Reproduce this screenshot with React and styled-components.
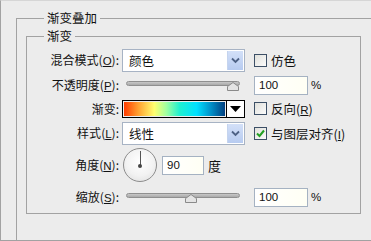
import styled, { createGlobalStyle } from "styled-components";

const GlobalStyle = createGlobalStyle`
  html, body {
    margin: 0;
    padding: 0;
    background: #ececec;
  }
  body {
    font-family: "Noto Sans CJK SC", "Liberation Sans", sans-serif;
    font-size: 12px;
    color: #111;
  }
`;

const Chevron = () => (
  <svg width="9" height="7" viewBox="0 0 9 7">
    <path d="M1 1.5 L4.5 5 L8 1.5" fill="none" stroke="#4d6185" strokeWidth="1.8" />
  </svg>
);

const Select = ({ value }) => (
  <SelectBox>
    <SelectText>{value}</SelectText>
    <SelectButton>
      <Chevron />
    </SelectButton>
  </SelectBox>
);

const Slider = ({ pos }) => (
  <SliderWrap>
    <Track />
    <Thumb style={{ left: pos }}>
      <svg width="12" height="9" viewBox="0 0 12 9">
        <path d="M0.5 8.5 L0.5 4.5 L6 0.5 L11.5 4.5 L11.5 8.5 Z" fill="#e4e4e4" stroke="#8a8a8a" />
      </svg>
    </Thumb>
  </SliderWrap>
);

const Check = ({ checked, children }) => (
  <CheckRow>
    <Box>
      {checked && (
        <svg width="9" height="9" viewBox="0 0 9 9">
          <path d="M1 4.5 L3.5 7 L8 1.5" fill="none" stroke="#22a022" strokeWidth="2" />
        </svg>
      )}
    </Box>
    <span>{children}</span>
  </CheckRow>
);

const Key = ({ k }) => (
  <>
    (<U>{k}</U>)
  </>
);

const App = () => {
  return (
    <Frame>
      <GlobalStyle />
      <Outer>
        <Legend>渐变叠加</Legend>
        <Inner>
          <InnerLegend>渐变</InnerLegend>
          <Grid>
            <Label>混合模式<Key k="O" />:</Label>
            <Select value="颜色" />
            <Check>仿色</Check>

            <Label>不透明度<Key k="P" />:</Label>
            <Slider pos={105} />
            <InputRow>
              <Field>100</Field>
              <Unit>%</Unit>
            </InputRow>

            <Label>渐变:</Label>
            <GradientPicker>
              <Swatch />
              <Arrow>
                <svg width="11" height="6" viewBox="0 0 11 6">
                  <path d="M0 0 L11 0 L5.5 6 Z" fill="#000" />
                </svg>
              </Arrow>
            </GradientPicker>
            <Check>反向<Key k="R" /></Check>

            <Label>样式<Key k="L" />:</Label>
            <Select value="线性" />
            <Check checked>与图层对齐<Key k="I" /></Check>

            <Label>角度<Key k="N" />:</Label>
            <AngleRow>
              <Dial>
                <Needle />
                <Pin />
              </Dial>
              <Field $w={42}>90</Field>
              <Unit $size={13}>度</Unit>
            </AngleRow>
            <span />

            <Label>缩放<Key k="S" />:</Label>
            <Slider pos={63} />
            <InputRow>
              <Field>100</Field>
              <Unit>%</Unit>
            </InputRow>
          </Grid>
        </Inner>
      </Outer>
    </Frame>
  );
};

export default App;

const Frame = styled.div`
  width: 371px;
  height: 241px;
  box-sizing: border-box;
  border-left: 1px solid #a2a2a2;
  border-bottom: 1px solid #a2a2a2;
  border-top: 1px solid #d6d6d6;
  overflow: hidden;
  background: #ececec;
`;

const Outer = styled.fieldset`
  margin: 8px -20px 0 15px;
  padding: 0 0 0 9px;
  border: 1px solid #a2a2a2;
  border-right: none;
  border-bottom: none;
  height: 240px;
  box-sizing: border-box;
`;

const Legend = styled.legend`
  margin-left: 18px;
  padding: 0 3px;
  font-size: 12.5px;
  line-height: 18px;
`;

const Inner = styled.fieldset`
  margin: 1px 0 0 0;
  width: 335px;
  box-sizing: border-box;
  padding: 4px 0 3px 0;
  border: 1px solid #a2a2a2;
`;

const InnerLegend = styled.legend`
  margin-left: 17px;
  padding: 0 3px;
  font-size: 12.5px;
  line-height: 16px;
`;

const Grid = styled.div`
  display: grid;
  grid-template-columns: 92px 123px auto;
  grid-template-rows: 25px 24px 23px 26px 38px 26px;
  column-gap: 3px;
  align-items: center;
  & > :nth-child(3n) {
    margin-left: 6px;
  }
`;

const Label = styled.div`
  text-align: right;
  white-space: nowrap;
  line-height: 16px;
`;

const U = styled.span`
  text-decoration: underline;
  font-family: "Liberation Sans", sans-serif;
  font-size: 11.5px;
`;

const SelectBox = styled.div`
  display: flex;
  align-items: stretch;
  height: 23px;
  box-sizing: border-box;
  border: 1px solid #a7b3c4;
  background: #fff;
`;

const SelectText = styled.div`
  flex: 1;
  padding-left: 6px;
  line-height: 21px;
  font-size: 12.5px;
`;

const SelectButton = styled.div`
  width: 15px;
  margin: 1px;
  display: flex;
  align-items: center;
  justify-content: center;
  background: linear-gradient(#d3e0f8, #b7cbf0);
  border-left: 1px solid #c5d4ee;
`;

const SliderWrap = styled.div`
  position: relative;
  height: 14px;
`;

const Track = styled.div`
  position: absolute;
  left: 4px;
  right: 5px;
  top: 3px;
  height: 3px;
  border: 1px solid #8f8f8f;
  border-radius: 3px;
  background: linear-gradient(#c8c8c8, #a9a9a9);
`;

const Thumb = styled.div`
  position: absolute;
  top: 4px;
  width: 12px;
  height: 9px;
  display: flex;
`;

const CheckRow = styled.div`
  display: flex;
  align-items: center;
  gap: 4px;
  white-space: nowrap;
  font-size: 12.5px;
`;

const Box = styled.div`
  width: 11px;
  height: 11px;
  border: 1px solid #3c4f66;
  background: linear-gradient(135deg, #e0e0db, #fbfbfb);
  display: flex;
  align-items: center;
  justify-content: center;
`;

const InputRow = styled.div`
  display: flex;
  align-items: center;
  gap: 4px;
`;

const Field = styled.div`
  width: ${(p) => p.$w || 54}px;
  height: 19px;
  box-sizing: border-box;
  border: 1px solid #a5b2c2;
  background: linear-gradient(90deg, #ffffff, #fffff4);
  padding-left: 4px;
  font-family: "Liberation Sans", sans-serif;
  font-size: 11.5px;
  line-height: 17px;
`;

const Unit = styled.span`
  font-family: "Liberation Sans", "Noto Sans CJK SC", sans-serif;
  font-size: ${(p) => p.$size || 11.5}px;
  margin-left: -1px;
`;

const GradientPicker = styled.div`
  display: flex;
  height: 18px;
  box-sizing: border-box;
  border: 1px solid #000;
`;

const Swatch = styled.div`
  flex: 1;
  margin: 1px;
  background: linear-gradient(
    90deg,
    #ff3b00 0%,
    #ffa030 14%,
    #ffff70 30%,
    #a0ffa0 42%,
    #20f0d0 55%,
    #00e0ff 72%,
    #0090c8 86%,
    #003f80 100%
  );
`;

const Arrow = styled.div`
  width: 17px;
  border-left: 1px solid #000;
  background: #fff;
  display: flex;
  align-items: center;
  justify-content: center;
`;

const AngleRow = styled.div`
  display: flex;
  align-items: center;
  gap: 5px;
`;

const Dial = styled.div`
  position: relative;
  width: 34px;
  height: 34px;
  box-sizing: border-box;
  border-radius: 50%;
  border: 1px solid #8c8c8c;
  background: radial-gradient(circle at 50% 40%, #ffffff, #f2f2f2 55%, #dcdcdc);
  margin-left: 1px;
`;

const Needle = styled.div`
  position: absolute;
  left: 15.5px;
  top: 2px;
  width: 1.5px;
  height: 15px;
  background: #555;
`;

const Pin = styled.div`
  position: absolute;
  left: 14px;
  top: 15px;
  width: 4px;
  height: 4px;
  border-radius: 50%;
  background: #444;
`;
